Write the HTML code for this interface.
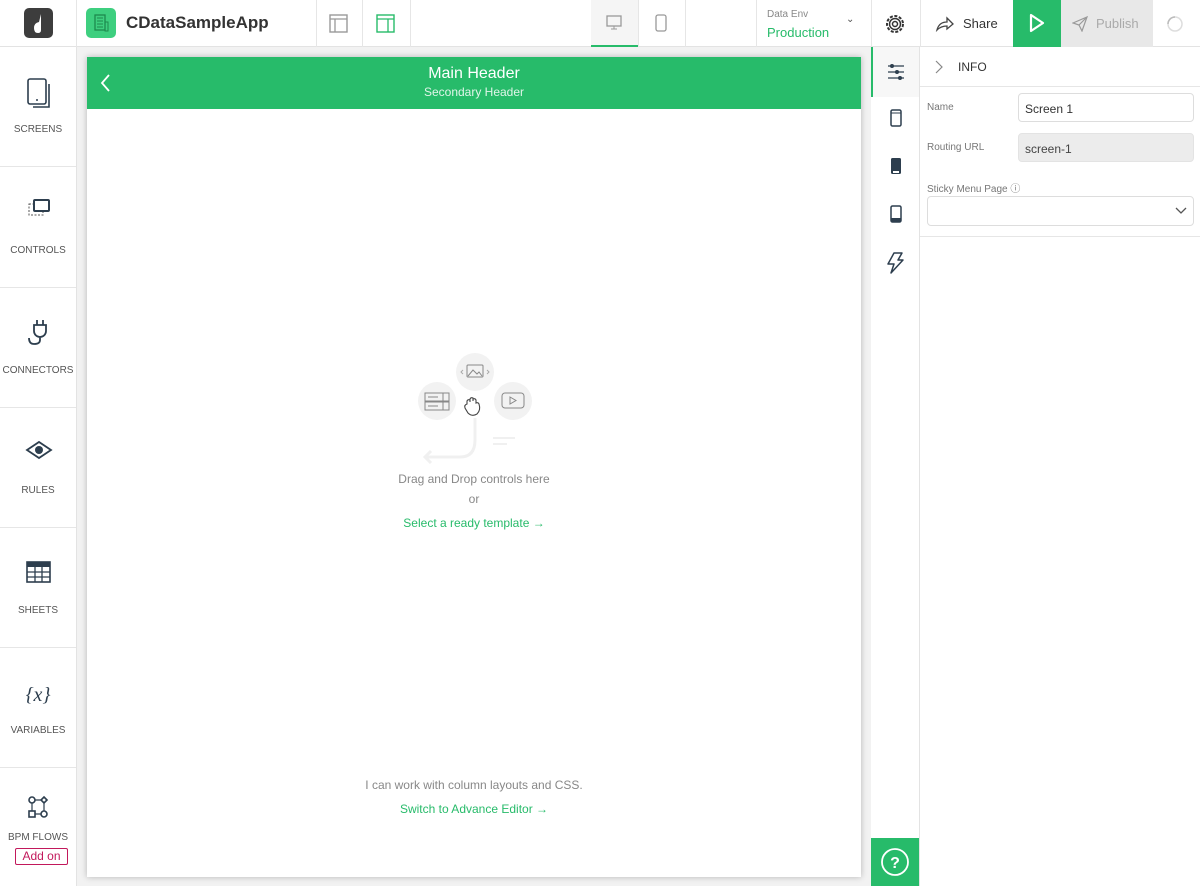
<!DOCTYPE html>
<html><head><meta charset="utf-8"><style>
*{box-sizing:border-box;margin:0;padding:0}
body{width:1200px;height:886px;overflow:hidden;font-family:"Liberation Sans",sans-serif;background:#fff;position:relative;color:#333}
.abs{position:absolute}
.top{left:0;top:0;width:1200px;height:47px;border-bottom:1px solid #e3e3e3;background:#fff}
.vl{position:absolute;top:0;width:1px;height:47px;background:#e6e6e6}
.side{left:0;top:47px;width:77px;height:839px;border-right:1px solid #e3e3e3;background:#fff}
.si{position:absolute;left:0;width:76px;height:120px;border-bottom:1px solid #e6e6e6;text-align:center;font-size:10px;color:#555}
.si svg{position:absolute;left:25px;top:30px}
.si span{position:absolute;left:0;right:0;top:77px}
.canvas{left:77px;top:47px;width:794px;height:839px;background:#f2f2f2}
.card{left:87px;top:57px;width:774px;height:820px;background:#fff;box-shadow:0 0 6px rgba(0,0,0,.25)}
.hdr{left:0;top:0;width:774px;height:52px;background:#27bb6a;color:#fff;text-align:center}
.rail{left:871px;top:47px;width:49px;height:839px;background:#fff;border-right:1px solid #e3e3e3}
.panel{left:920px;top:47px;width:280px;height:839px;background:#fff}
.lbl{font-size:10px;color:#777;position:absolute}
.inp{position:absolute;border:1px solid #ddd;border-radius:4px;font-size:12px;padding:8px 6px;height:29px}
.green{color:#27bb6a}
</style></head><body>
<div class="abs top">
 <div class="abs" style="left:24px;top:8px;width:29px;height:30px;background:#3d3d3d;border-radius:5px"><svg width="29" height="30"><path d="M17 6 L17 22 Q17 25 14 25 Q10 25 10 20 Q10 15 15 14 Z" fill="#fff"/></svg></div>
 <div class="vl" style="left:76px"></div>
 <div class="abs" style="left:86px;top:8px;width:30px;height:30px;background:#3ecf7f;border-radius:5px"><svg width="30" height="30"><rect x="9" y="7" width="10" height="15" fill="none" stroke="#1d8a4e" stroke-width="1.3"/><path d="M11 10h6M11 13h6M11 16h6M11 19h6" stroke="#1d8a4e"/><rect x="19" y="14" width="3" height="9" fill="none" stroke="#1d8a4e"/></svg></div>
 <div class="abs" style="left:126px;top:13px;font-size:17px;font-weight:bold;color:#333">CDataSampleApp</div>
 <div class="vl" style="left:316px"></div>
 <svg class="abs" style="left:329px;top:14px" width="20" height="19"><rect x="1" y="1" width="17" height="17" fill="none" stroke="#999" stroke-width="1.4"/><path d="M1 5h17M6 5v13" stroke="#999" stroke-width="1.3"/></svg>
 <div class="vl" style="left:362px"></div>
 <svg class="abs" style="left:376px;top:14px" width="20" height="19"><rect x="1" y="1" width="17" height="17" fill="none" stroke="#27bb6a" stroke-width="1.4"/><path d="M1 5h17M12 5v13" stroke="#27bb6a" stroke-width="1.3"/></svg>
 <div class="vl" style="left:410px"></div>
 <div class="abs" style="left:591px;top:0;width:47px;height:47px;background:#f5f5f5;border-bottom:2px solid #27bb6a"></div>
 <svg class="abs" style="left:606px;top:15px" width="17" height="16"><rect x="1" y="1" width="14" height="10" fill="none" stroke="#999" stroke-width="1.3"/><path d="M5 14h6M8 11v3" stroke="#999"/></svg>
 <div class="vl" style="left:638px"></div>
 <svg class="abs" style="left:655px;top:14px" width="12" height="18"><rect x="1" y="1" width="10" height="16" rx="2" fill="none" stroke="#999" stroke-width="1.3"/></svg>
 <div class="vl" style="left:685px"></div>
 <div class="vl" style="left:756px"></div>
 <div class="abs" style="left:767px;top:9px;font-size:10px;color:#888">Data Env</div>
 <div class="abs green" style="left:767px;top:25px;font-size:13px">Production</div>
 <div class="abs" style="left:846px;top:14px;font-size:10px;color:#555">&#8964;</div>
 <div class="vl" style="left:871px"></div>
 <svg class="abs" style="left:884px;top:13px" width="22" height="22"><circle cx="11" cy="11" r="8" fill="none" stroke="#333" stroke-width="2" stroke-dasharray="3 1.6"/><circle cx="11" cy="11" r="5.5" fill="none" stroke="#333" stroke-width="1.5"/><circle cx="11" cy="11" r="2.5" fill="none" stroke="#333" stroke-width="1.5"/></svg>
 <div class="vl" style="left:920px"></div>
 <svg class="abs" style="left:935px;top:16px" width="20" height="16"><path d="M2 14 Q4 6 12 6 V2 L18 8 L12 13 V10 Q6 10 2 14Z" fill="none" stroke="#444" stroke-width="1.3"/></svg>
 <div class="abs" style="left:963px;top:16px;font-size:13px;color:#333">Share</div>
 <div class="abs" style="left:1013px;top:0;width:48px;height:47px;background:#27bb6a"><svg width="48" height="47"><path d="M18 15 L30 23 L18 31Z" fill="none" stroke="#fff" stroke-width="2.2" stroke-linejoin="round"/></svg></div>
 <div class="abs" style="left:1061px;top:0;width:92px;height:47px;background:#e8e8e8"><svg class="abs" style="left:11px;top:16px" width="16" height="16"><path d="M1 7 L15 1 L10 15 L7 9Z M7 9 L15 1" fill="none" stroke="#999" stroke-width="1.2"/></svg><div class="abs" style="left:35px;top:16px;font-size:13px;color:#aaa">Publish</div></div>
 <svg class="abs" style="left:1166px;top:15px" width="18" height="18"><circle cx="9" cy="9" r="7" fill="none" stroke="#ddd" stroke-width="1.5"/><path d="M9 2 A7 7 0 0 0 2 9" fill="none" stroke="#bbb" stroke-width="1.5"/></svg>
</div>

<div class="abs side">
 <div class="si" style="top:0"><svg width="28" height="32"><rect x="3" y="2" width="18" height="25" rx="2" fill="none" stroke="#2d3e4e" stroke-width="1.6"/><path d="M24 7 V30 H8" fill="none" stroke="#2d3e4e" stroke-width="1.6"/><circle cx="12" cy="23" r="1" fill="#2d3e4e"/></svg><span>SCREENS</span></div>
 <div class="si" style="top:121px"><svg width="28" height="28"><rect x="4" y="6" width="14" height="11" stroke="#555" stroke-dasharray="2 1.5" fill="none"/><rect x="9" y="2" width="15" height="11" rx="1" fill="#fff" stroke="#2d3e4e" stroke-width="2"/></svg><span>CONTROLS</span></div>
 <div class="si" style="top:241px"><svg width="28" height="28"><path d="M12 2v5M18 2v5M9 7h12v6a6 6 0 0 1-12 0Z M15 19v3 Q15 26 9 26 Q4 26 4 20" fill="none" stroke="#2d3e4e" stroke-width="1.8"/></svg><span>CONNECTORS</span></div>
 <div class="si" style="top:361px"><svg width="28" height="28"><path d="M2 12 L14 4 L26 12 L14 20Z" fill="none" stroke="#2d3e4e" stroke-width="1.8"/><circle cx="14" cy="12" r="4" fill="#2d3e4e"/></svg><span>RULES</span></div>
 <div class="si" style="top:481px"><svg width="28" height="28"><rect x="2" y="4" width="23" height="20" fill="none" stroke="#2d3e4e" stroke-width="1.6"/><rect x="2" y="4" width="23" height="5" fill="#2d3e4e"/><path d="M2 14h23M2 19h23M10 9v15M17 9v15" stroke="#2d3e4e" stroke-width="1.3"/></svg><span>SHEETS</span></div>
 <div class="si" style="top:601px"><div style="position:absolute;left:0;right:0;top:36px;font-family:'Liberation Serif',serif;font-size:20px;font-style:italic;color:#2d3e4e">{x}</div><span>VARIABLES</span></div>
 <div class="si" style="top:721px;border:none"><svg width="28" height="28" style="top:26px"><circle cx="7" cy="6" r="3" fill="none" stroke="#2d3e4e" stroke-width="1.6"/><path d="M19 3 L22 6 L19 9 L16 6Z" fill="none" stroke="#2d3e4e" stroke-width="1.6"/><rect x="4" y="17" width="6" height="6" fill="none" stroke="#2d3e4e" stroke-width="1.6"/><circle cx="19" cy="20" r="3" fill="none" stroke="#2d3e4e" stroke-width="1.6"/><path d="M10 6h6M7 9v8M19 9v8M10 20h6" stroke="#2d3e4e" stroke-width="1.2"/></svg><span style="top:64px">BPM FLOWS</span><div style="position:absolute;left:15px;top:80px;width:53px;height:17px;border:1px solid #c2185b;border-radius:2px;color:#c2185b;font-size:12px;line-height:15px">Add on</div></div>
</div>

<div class="abs canvas"></div>
<div class="abs card">
 <div class="abs hdr"><svg class="abs" style="left:12px;top:16px" width="14" height="20"><path d="M10 2 L3 10 L10 18" fill="none" stroke="#fff" stroke-width="1.8"/></svg><div style="font-size:16px;padding-top:8px">Main Header</div><div style="font-size:12px;color:#e0f5e9;margin-top:2px">Secondary Header</div></div>
 <svg class="abs" style="left:328px;top:295px" width="120" height="115">
  <circle cx="60" cy="20" r="19" fill="#f2f2f2"/><circle cx="22" cy="49" r="19" fill="#f2f2f2"/><circle cx="98" cy="49" r="19" fill="#f2f2f2"/>
  <rect x="52" y="13" width="16" height="12" rx="1" fill="none" stroke="#888"/><path d="M53 24 L58 18 L62 22 L64 20 L67 24" fill="none" stroke="#888"/><path d="M48 18 L46 20 L48 22M72 18 L74 20 L72 22" fill="none" stroke="#aaa"/>
  <rect x="10" y="41" width="24" height="8" fill="none" stroke="#888"/><rect x="10" y="50" width="24" height="8" fill="none" stroke="#888"/><path d="M13 45h10M13 54h10M28 41v17" stroke="#888"/>
  <rect x="87" y="41" width="22" height="15" rx="3" fill="none" stroke="#888"/><path d="M95 45 L101 48.5 L95 52Z" fill="none" stroke="#888"/>
  <path d="M52 52 L52 49 Q53 47 55 48 L55 50 L55 47 Q56 45 58 46 L58 49 L58 47 Q60 46 61 48 L61 51 Q63 50 64 52 Q66 58 62 62 Q57 65 53 61 L50 56 Q49 53 52 52Z" fill="none" stroke="#444" stroke-width="1.1"/>
  <path d="M60 66 V88 Q60 105 45 105 H10 M16 99 L10 105 L16 111" fill="none" stroke="#f0f0f0" stroke-width="3"/>
  <path d="M78 86h22M78 92h14" stroke="#f0f0f0" stroke-width="2"/>
 </svg>
 <div class="abs" style="left:0;width:774px;top:415px;text-align:center;font-size:12px;color:#888">Drag and Drop controls here</div>
 <div class="abs" style="left:0;width:774px;top:435px;text-align:center;font-size:12px;color:#888">or</div>
 <div class="abs green" style="left:0;width:774px;top:459px;text-align:center;font-size:12px">Select a ready template →</div>
 <div class="abs" style="left:0;width:774px;top:721px;text-align:center;font-size:12px;color:#888">I can work with column layouts and CSS.</div>
 <div class="abs green" style="left:0;width:774px;top:745px;text-align:center;font-size:12px">Switch to Advance Editor →</div>
</div>

<div class="abs rail">
 <div class="abs" style="left:0;top:0;width:48px;height:50px;background:#f7f7f7;border-left:2px solid #27bb6a"></div>
 <svg class="abs" style="left:16px;top:16px" width="18" height="18"><path d="M1 3h16M1 9h16M1 15h16" stroke="#2d3e4e" stroke-width="1.3"/><circle cx="5" cy="3" r="2" fill="#2d3e4e"/><circle cx="10" cy="9" r="2" fill="#2d3e4e"/><circle cx="13" cy="15" r="2" fill="#2d3e4e"/></svg>
 <svg class="abs" style="left:19px;top:62px" width="12" height="18"><rect x="1" y="1" width="10" height="16" rx="1.5" fill="none" stroke="#2d3e4e" stroke-width="1.5"/><path d="M1 4h10" stroke="#2d3e4e"/></svg>
 <svg class="abs" style="left:19px;top:110px" width="12" height="18"><rect x="1" y="1" width="10" height="16" rx="1.5" fill="#2d3e4e"/><rect x="3" y="14" width="6" height="2" fill="#fff"/></svg>
 <svg class="abs" style="left:19px;top:158px" width="12" height="18"><rect x="1" y="1" width="10" height="16" rx="1.5" fill="none" stroke="#2d3e4e" stroke-width="1.5"/><rect x="1" y="13" width="10" height="4" fill="#2d3e4e"/></svg>
 <svg class="abs" style="left:14px;top:205px" width="20" height="22"><path d="M9 1 H17 L13 8 H18 L6 21 L9 12 H3 Z" fill="none" stroke="#2d3e4e" stroke-width="1.5" stroke-linejoin="round"/></svg>
 <div class="abs" style="left:0;top:791px;width:48px;height:48px;background:#27bb6a"><svg width="48" height="48"><circle cx="24" cy="24" r="13" fill="none" stroke="#fff" stroke-width="1.8"/><text x="24" y="30" text-anchor="middle" font-family="Liberation Sans" font-weight="bold" font-size="16" fill="#fff">?</text></svg></div>
</div>

<div class="abs panel">
 <div class="abs" style="left:0;top:0;width:280px;height:40px;border-bottom:1px solid #e6e6e6"></div>
 <svg class="abs" style="left:14px;top:12px" width="10" height="16"><path d="M2 2 L8 8 L2 14" fill="none" stroke="#888" stroke-width="1.2"/></svg>
 <div class="abs" style="left:38px;top:13px;font-size:12px;color:#333">INFO</div>
 <div class="lbl" style="left:7px;top:55px">Name</div>
 <div class="inp" style="left:98px;top:46px;width:176px;color:#333">Screen 1</div>
 <div class="lbl" style="left:7px;top:95px">Routing URL</div>
 <div class="inp" style="left:98px;top:86px;width:176px;background:#ececec;border-color:#e3e3e3;color:#444">screen-1</div>
 <div class="lbl" style="left:7px;top:133px">Sticky Menu Page &#9432;</div>
 <div class="inp" style="left:7px;top:149px;width:267px;height:30px"></div>
 <svg class="abs" style="left:255px;top:160px" width="12" height="8"><path d="M1 1 L6 6 L11 1" fill="none" stroke="#555" stroke-width="1.3"/></svg>
 <div class="abs" style="left:0;top:189px;width:280px;height:1px;background:#e6e6e6"></div>
</div>
</body></html>
